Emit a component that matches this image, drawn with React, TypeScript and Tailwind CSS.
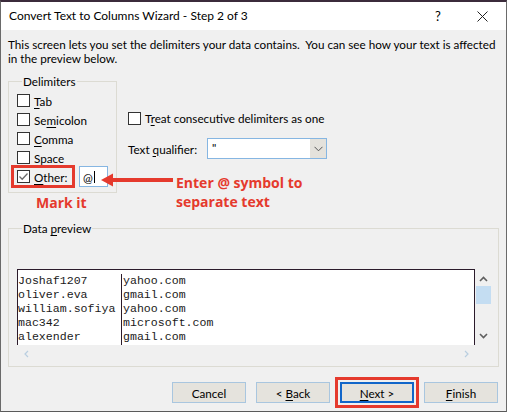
import type { ReactNode } from "react";

const ROWS: [string, string][] = [
  ["Joshaf1207", "yahoo.com"],
  ["oliver.eva", "gmail.com"],
  ["william.sofiya", "yahoo.com"],
  ["mac342", "microsoft.com"],
  ["alexender", "gmail.com"],
];

function Box({ checked = false }: { checked?: boolean }) {
  return (
    <span className="flex h-[13px] w-[13px] shrink-0 items-center justify-center border border-[#333] bg-white">
      {checked ? (
        <svg width="11" height="11" viewBox="0 0 11 11">
          <path d="M1.5 5.5 L4.2 8.2 L9.5 2.5" fill="none" stroke="#6b6b6b" strokeWidth="1.3" />
        </svg>
      ) : null}
    </span>
  );
}

function Check({ label, checked }: { label: ReactNode; checked?: boolean }) {
  return (
    <div className="flex h-[19px] items-center gap-[4px]">
      <Box checked={checked} />
      <span>{label}</span>
    </div>
  );
}

function Key({ children }: { children: string }) {
  return <span className="underline underline-offset-2">{children}</span>;
}

function Btn({ children, focused = false }: { children: ReactNode; focused?: boolean }) {
  return (
    <div
      className={
        focused
          ? "flex h-[21px] w-[74px] items-center justify-center border-2 border-[#1166c9] bg-[#e5e3dd]"
          : "flex h-[21px] w-[74px] items-center justify-center border border-[#a9c6df] bg-[#e5e3dd]"
      }
    >
      <span>{children}</span>
    </div>
  );
}

export default function App() {
  return (
    <div className="relative flex h-[412px] w-[507px] flex-col border-x border-b border-t-2 border-x-[#6a6a6a] border-b-[#5a5a5a] border-t-[#3b2b3b] bg-[#f0f0f0] font-['Lato',sans-serif] text-[11.7px] leading-[14px] text-black">
      {/* title bar */}
      <div className="flex h-[28px] items-center bg-white pl-[8px]">
        <span className="text-[12px]">Convert Text to Columns Wizard - Step 2 of 3</span>
        <span className="ml-auto w-[14px] text-[13px]">?</span>
        <svg className="ml-[28px] mr-[18px]" width="11" height="11" viewBox="0 0 11 11">
          <path d="M0.5 0.5 L10.5 10.5 M10.5 0.5 L0.5 10.5" stroke="#222" strokeWidth="1" />
        </svg>
      </div>

      <div className="flex flex-col px-[7px]">
        <p className="mt-[7px] whitespace-pre">
          {"This screen lets you set the delimiters your data contains.  You can see how your text is affected\nin the preview below."}
        </p>

        <div className="mt-[9px] flex items-start">
          <fieldset className="relative w-[109px] border border-[#dcdbd3] pb-[6px] pl-[8px] pt-[3px]">
            <legend className="ml-[5px] px-px">Delimiters</legend>
            <Check label={<><Key>T</Key>ab</>} />
            <Check label={<>Se<Key>m</Key>icolon</>} />
            <Check label={<><Key>C</Key>omma</>} />
            <Check label={<><Key>S</Key>pace</>} />
            <div className="flex h-[19px] items-center">
              <Box checked />
              <span className="ml-[4px] w-[41px]">
                <Key>O</Key>ther:
              </span>
              <div className="ml-[4px] flex h-[21px] w-[29px] items-center border border-[#86b6e2] bg-white pl-[3px]">
                <span>@</span>
                <span className="ml-px h-[12px] w-px bg-black" />
              </div>
            </div>
            {/* annotation box */}
            <span className="absolute left-[2px] top-[77px] h-[23px] w-[64px] border-[3px] border-[#e53a2d]" />
          </fieldset>

          <div className="ml-[11px] mt-[37px] flex flex-col">
            <div className="flex h-[14px] items-center gap-[4px]">
              <Box />
              <span>
                T<Key>r</Key>eat consecutive delimiters as one
              </span>
            </div>
            <div className="mt-[13px] flex items-center">
              <span className="w-[79px]">
                Text <Key>q</Key>ualifier:
              </span>
              <div className="flex h-[21px] w-[120px] border border-[#86b6e2] bg-white">
                <span className="flex-1 pl-[4px] leading-[17px]">"</span>
                <span className="flex w-[16px] items-center justify-center bg-[#e4e2dc]">
                  <svg width="9" height="6" viewBox="0 0 9 6">
                    <path d="M0.5 0.8 L4.5 4.8 L8.5 0.8" fill="none" stroke="#555" strokeWidth="1" />
                  </svg>
                </span>
              </div>
            </div>
          </div>
        </div>

        <fieldset className="mt-[28px] border border-[#dcdbd3] pb-[4px] pl-[8px] pt-[34px]">
          <legend className="ml-[5px] px-px">
            Data <Key>p</Key>review
          </legend>
          <div className="flex h-[76px]">
            <div className="flex w-[458px] border-x border-t border-[#2b1b2b] bg-white pt-[4px] font-['Liberation_Mono',monospace] text-[11.6px] leading-[14px] text-[#1a1a1a]">
              <div className="flex w-[104px] flex-col border-r border-[#2b1b2b]">
                {ROWS.map(([a]) => (
                  <span key={a}>{a}</span>
                ))}
              </div>
              <div className="flex flex-col pl-px">
                {ROWS.map(([a, b]) => (
                  <span key={a}>{b}</span>
                ))}
              </div>
            </div>
            <div className="flex w-[17px] flex-col items-center">
              <svg className="mt-[7px]" width="9" height="6" viewBox="0 0 9 6">
                <path d="M1 5 L4.5 1.5 L8 5" fill="none" stroke="#5f5f5f" strokeWidth="1.6" />
              </svg>
              <span className="mt-[4px] h-[18px] w-[15px] bg-[#c4ddf2]" />
              <svg className="mb-[6px] mt-auto" width="9" height="6" viewBox="0 0 9 6">
                <path d="M1 1 L4.5 4.5 L8 1" fill="none" stroke="#5f5f5f" strokeWidth="1.6" />
              </svg>
            </div>
          </div>
          <div className="flex h-[17px] w-[458px] items-center justify-between pl-[7px] pr-[6px]">
            <svg width="5" height="8" viewBox="0 0 5 8">
              <path d="M4 1 L1 4 L4 7" fill="none" stroke="#b9cee0" strokeWidth="1.2" />
            </svg>
            <svg width="5" height="8" viewBox="0 0 5 8">
              <path d="M1 1 L4 4 L1 7" fill="none" stroke="#b9cee0" strokeWidth="1.2" />
            </svg>
          </div>
        </fieldset>

        <div className="mt-[15px] flex justify-end gap-[10px] pr-[1px]">
          <Btn>Cancel</Btn>
          <Btn>
            &lt; <Key>B</Key>ack
          </Btn>
          <div className="relative">
            <Btn focused>
              <Key>N</Key>ext &gt;
            </Btn>
            <span className="absolute -inset-[5px] border-[3px] border-[#e53a2d]" />
          </div>
          <Btn>
            <Key>F</Key>inish
          </Btn>
        </div>
      </div>

      {/* annotations */}
      <svg className="absolute left-[100px] top-[170px]" width="74" height="16" viewBox="0 0 74 16">
        <path d="M0 8 L12 1.5 L12 14.5 Z" fill="#e53a2d" />
        <rect x="10" y="6" width="62" height="4" fill="#e53a2d" />
      </svg>
      <span className="absolute left-[35px] top-[192px] font-['Open_Sans',sans-serif] text-[14px] font-bold leading-[18px] text-[#e53a2d]">
        Mark it
      </span>
      <span className="absolute left-[175px] top-[171px] font-['Open_Sans',sans-serif] text-[14px] font-bold leading-[19px] text-[#e53a2d]">
        Enter @ symbol to
        <br />
        separate text
      </span>
    </div>
  );
}
